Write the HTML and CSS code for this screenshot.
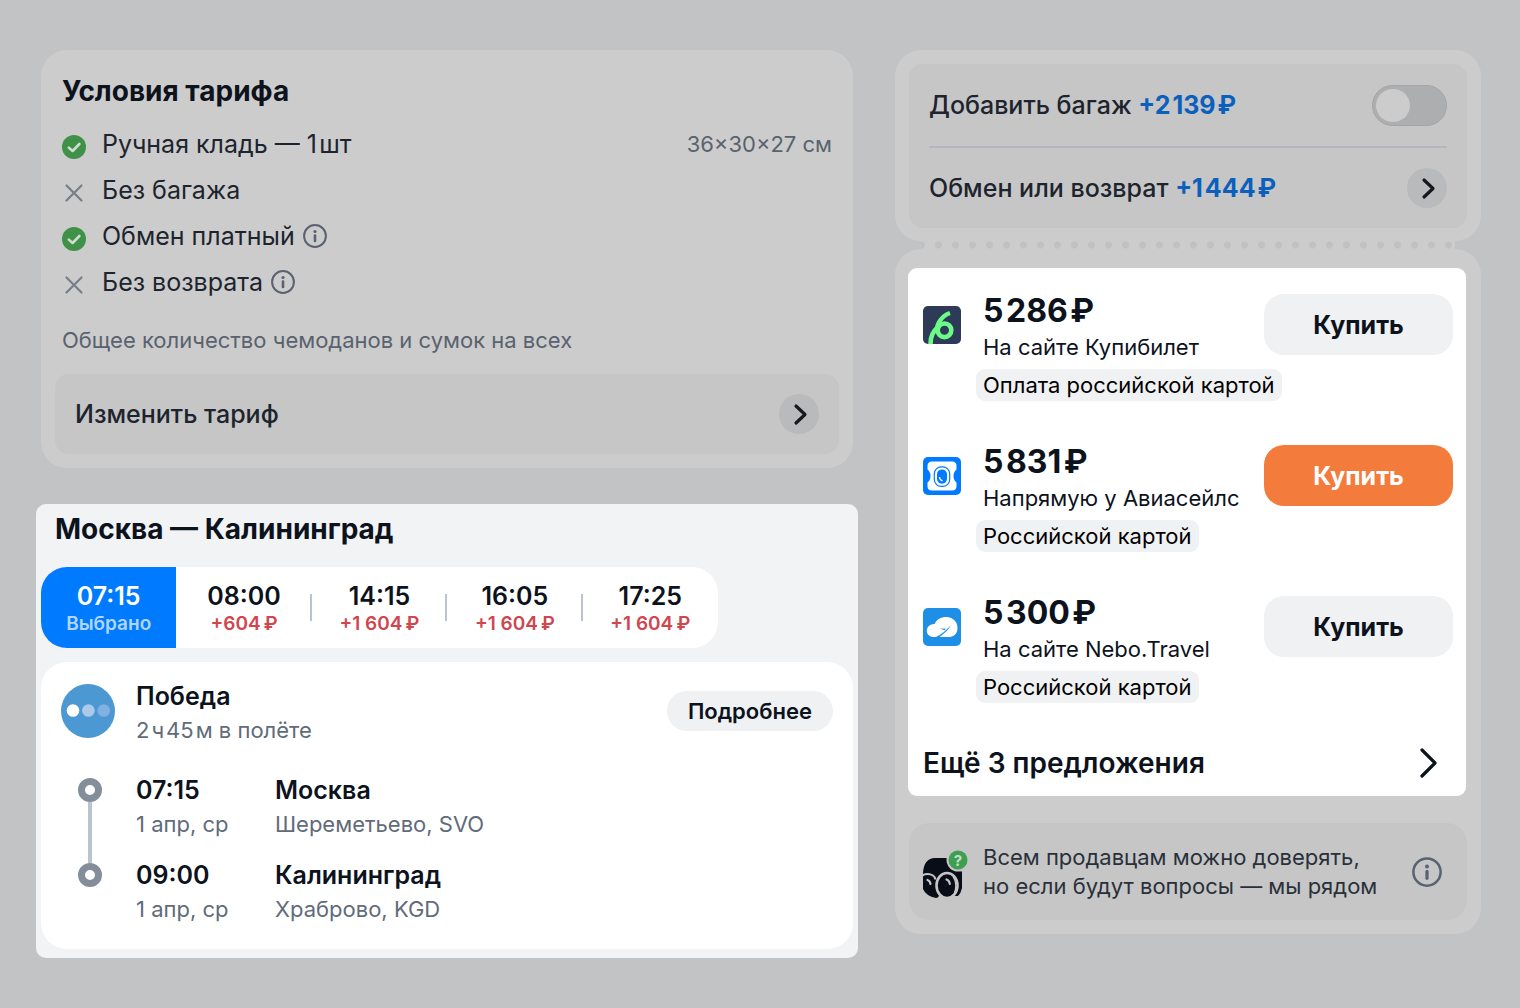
FILE: index.html
```html
<!DOCTYPE html>
<html lang="ru">
<head>
    <meta charset="UTF-8">
    <meta name="viewport" content="width=device-width, initial-scale=1.0">
    <title>Москва — Калининград</title>
    <link rel="stylesheet" href="styles.css">
</head>
<body>
    <svg class="sprite" aria-hidden="true">
        <symbol id="check" viewBox="0 0 24 24">
            <circle cx="12" cy="12" r="12" fill="#3f9147"/>
            <path d="M6.800 12.600l3.800 3.400 6.800-7" fill="none" stroke="#cfdccf" stroke-width="2.600" stroke-linecap="round" stroke-linejoin="round"/>
        </symbol>
        <symbol id="cross" viewBox="0 0 24 24">
            <path d="M4.500 4.500l15 15M19.500 4.500l-15 15" fill="none" stroke="#767e88" stroke-width="2.200" stroke-linecap="round"/>
        </symbol>
        <symbol id="info" viewBox="0 0 24 24">
            <circle cx="12" cy="12" r="10.900" fill="none" stroke="currentColor" stroke-width="2"/>
            <circle cx="12" cy="7.500" r="1.600" fill="currentColor"/>
            <path d="M12 11.500v5.500" stroke="currentColor" stroke-width="2.600" stroke-linecap="round"/>
        </symbol>
        <symbol id="chevron" viewBox="0 0 40 40">
            <path d="M17 12l9 8.500-9 8.500" fill="none" stroke="currentColor" stroke-width="3.200" stroke-linecap="round" stroke-linejoin="round"/>
        </symbol>
    </svg>

    <div class="page">
        <main class="column">
            <section class="card tariff">
                <h2>Условия тарифа</h2>
                <ul class="rules">
                    <li><svg class="mark"><use href="#check"/></svg>Ручная кладь — 1&#8202;шт <span class="size">36×30×27 см</span></li>
                    <li><svg class="mark"><use href="#cross"/></svg>Без багажа</li>
                    <li><svg class="mark"><use href="#check"/></svg>Обмен платный <svg class="info"><use href="#info"/></svg></li>
                    <li><svg class="mark"><use href="#cross"/></svg>Без возврата <svg class="info"><use href="#info"/></svg></li>
                </ul>
                <p class="note">Общее количество чемоданов и сумок на всех</p>
                <button class="change" type="button">Изменить тариф <svg class="arrow"><use href="#chevron"/></svg></button>
            </section>

            <section class="flight">
                <h2>Москва — Калининград</h2>
                <div class="times">
                    <button type="button" class="active"><b>07:15</b><small>Выбрано</small></button>
                    <button type="button"><b>08:00</b><small>+604&#8201;₽</small></button>
                    <button type="button"><b>14:15</b><small>+1 604&#8201;₽</small></button>
                    <button type="button"><b>16:05</b><small>+1 604&#8201;₽</small></button>
                    <button type="button"><b>17:25</b><small>+1 604&#8201;₽</small></button>
                </div>
                <div class="segment">
                    <div class="carrier">
                        <svg class="logo" viewBox="0 0 54 54">
                            <circle cx="27" cy="27" r="27" fill="#4b98d2"/>
                            <circle cx="12" cy="26.500" r="6.300" fill="#fff"/>
                            <circle cx="27.400" cy="26.500" r="6.300" fill="#abcaea"/>
                            <circle cx="42.800" cy="26.500" r="6.300" fill="#82b0e0"/>
                        </svg>
                        <div class="carrier-text">
                            <h3>Победа</h3>
                            <p>2&#8202;ч&#8202;45&#8202;м в полёте</p>
                        </div>
                        <button type="button" class="more">Подробнее</button>
                    </div>
                    <ol class="route">
                        <li>
                            <div><b>07:15</b><span>1 апр, ср</span></div>
                            <div><b>Москва</b><span>Шереметьево, SVO</span></div>
                        </li>
                        <li>
                            <div><b>09:00</b><span>1 апр, ср</span></div>
                            <div><b>Калининград</b><span>Храброво, KGD</span></div>
                        </li>
                    </ol>
                </div>
            </section>
        </main>

        <aside class="column">
            <section class="card options">
                <div class="panel">
                    <div class="option">
                        <label for="baggage">Добавить багаж <strong>+2&#8202;139&#8202;₽</strong></label>
                        <input type="checkbox" id="baggage" class="switch">
                    </div>
                    <div class="option">
                        <span>Обмен или возврат <strong>+1&#8202;444&#8202;₽</strong></span>
                        <button type="button" aria-label="Обмен или возврат"><svg class="arrow"><use href="#chevron"/></svg></button>
                    </div>
                </div>
            </section>
            <div class="perforation"></div>
            <section class="card prices">
                <div class="offers">
                    <div class="offer">
                        <svg class="agent" viewBox="0 0 38 38">
                            <rect width="38" height="38" rx="5" fill="#2d3a58"/>
                            <path d="M7.500 38C7.500 30 10 25.500 16 20" fill="none" stroke="#6dfb87" stroke-width="4.600"/>
                            <path d="M27 7C19 9.500 13.500 18 13.800 25" fill="none" stroke="#6dfb87" stroke-width="4.400"/>
                            <circle cx="21.500" cy="24.300" r="6.800" fill="none" stroke="#6dfb87" stroke-width="4.600"/>
                        </svg>
                        <div class="offer-text">
                            <b>5&#8202;286&#8202;₽</b>
                            <p>На сайте Купибилет</p>
                            <span class="chip">Оплата российской картой</span>
                        </div>
                        <button type="button" class="buy">Купить</button>
                    </div>
                    <div class="offer">
                        <svg class="agent" viewBox="0 0 38 38">
                            <rect width="38" height="38" rx="5" fill="#007aff"/>
                            <path d="M9 4.500h20q4.500 0 4.500 4.500v3.500q-3 2.500-3 6.500t3 6.500V29q0 4.500-4.500 4.500H9q-4.500 0-4.500-4.500v-3.500q3-2.500 3-6.500t-3-6.500V9q0-4.500 4.500-4.500z" fill="#fff"/>
                            <rect x="11.300" y="9.800" width="15.400" height="19.600" rx="7" fill="none" stroke="#007aff" stroke-width="1.200"/>
                            <rect x="14" y="12.400" width="10" height="14.400" rx="5" fill="#007aff"/>
                            <path d="M16.500 20q0 3 3 3.800" fill="none" stroke="#fff" stroke-width="1.200"/>
                        </svg>
                        <div class="offer-text">
                            <b>5&#8202;831&#8202;₽</b>
                            <p>Напрямую у Авиасейлс</p>
                            <span class="chip">Российской картой</span>
                        </div>
                        <button type="button" class="buy primary">Купить</button>
                    </div>
                    <div class="offer">
                        <svg class="agent" viewBox="0 0 38 38">
                            <rect width="38" height="38" rx="5" fill="#1e8fe6"/>
                            <path d="M10 29C1.500 28.500 1.500 16 11.500 16 15.500 6.500 31 6.500 34 16.500 36 24 32 29 26 29z" fill="#fff"/>
                            <path d="M13 29c6-3 10-6.500 15.500-12.500-3 5-6.500 8.500-12 12.500zM17 20.500l6 .3-1.500 1.500z" fill="#1e8fe6"/>
                        </svg>
                        <div class="offer-text">
                            <b>5&#8202;300&#8202;₽</b>
                            <p>На сайте Nebo.Travel</p>
                            <span class="chip">Российской картой</span>
                        </div>
                        <button type="button" class="buy">Купить</button>
                    </div>
                    <button type="button" class="show-all">Ещё 3 предложения
                        <svg viewBox="0 0 20 32"><path d="M3 3l13 13L3 29" fill="none" stroke="currentColor" stroke-width="3.200" stroke-linecap="round" stroke-linejoin="round"/></svg>
                    </button>
                </div>
                <div class="trust">
                    <svg class="mascot" viewBox="0 0 46 50">
                        <path d="M1 26C1 14 6 9 13 9h15l12 14v16q-1 5-4 8H17q-1 2-3 2-10-2-13-9z" fill="#080d17"/>
                        <path d="M0 26.500q6-3 11 0q2 1.500 2.500 4" fill="none" stroke="#c6c6c6" stroke-width="2"/>
                        <ellipse cx="25" cy="36.500" rx="10.500" ry="12.500" fill="#080d17" stroke="#c6c6c6" stroke-width="2.600"/>
                        <path d="M31 27.500q5 8 1 18" fill="none" stroke="#c6c6c6" stroke-width="1.200"/>
                        <path d="M24.500 30.500q3 1 3.300 4.500M5.500 31q2.500 .800 3 4" fill="none" stroke="#c6c6c6" stroke-width="2.200" stroke-linecap="round"/>
                        <circle cx="36" cy="11" r="11.500" fill="#c6c6c6"/>
                        <circle cx="36" cy="11" r="9.500" fill="#3e9e52"/>
                        <text x="36" y="16.500">?</text>
                    </svg>
                    <p>Всем продавцам можно доверять,<br>но если будут вопросы — мы рядом</p>
                    <svg class="info large"><use href="#info"/></svg>
                </div>
            </section>
        </aside>
    </div>
</body>
</html>
```
FILE: styles.css
```css
*,
*::before,
*::after {
    box-sizing: border-box;
}

body {
    margin: 0;
    min-height: 100vh;
    background-color: #c2c3c5;
    font-family: 'Inter', 'Liberation Sans', sans-serif;
    color: #0d131d;
}

h2, h3, p, ul, ol {
    margin: 0;
    padding: 0;
    list-style: none;
}

button {
    border: none;
    padding: 0;
    background: none;
    font-family: inherit;
    color: inherit;
    cursor: pointer;
}

.sprite {
    display: none;
}

.page {
    display: grid;
    grid-template-columns: 812fr 586fr;
    align-items: start;
    gap: 42px;
    padding: 50px 39px 50px 41px;
}

h2 {
    font-size: 28px;
    line-height: 36px;
    font-weight: 700;
}

.card {
    background-color: #ccc;
    border-radius: 26px;
    padding: 14px;
}

/* Условия тарифа */
.tariff {
    padding-top: 23px;
    color: #1d242e;
}

.tariff h2 {
    padding: 0 7px;
    color: #0d131d;
}

.rules {
    margin-top: 12px;
    padding: 0 7px;
}

.rules li {
    display: flex;
    align-items: center;
    gap: 8px;
    height: 46px;
    font-size: 25px;
}

.mark {
    width: 24px;
    height: 24px;
    margin: 5px 8px 0 0;
}

.info {
    width: 24px;
    height: 24px;
    overflow: visible;
    color: #59626e;
}

.size {
    margin-left: auto;
    font-size: 22px;
    color: #59626e;
}

.note {
    margin: 21px 7px 20px;
    font-size: 22px;
    line-height: 28px;
    color: #59626e;
}

.change {
    display: flex;
    align-items: center;
    justify-content: space-between;
    width: 100%;
    height: 80px;
    padding: 0 20px;
    border-radius: 14px;
    background-color: #c6c6c6;
    font-size: 25px;
    font-weight: 500;
}

.arrow {
    display: block;
    width: 40px;
    height: 40px;
    border-radius: 50%;
    background-color: #b9babc;
    color: #14191f;
}

/* Рейс */
.flight {
    margin: 36px -5px 0;
    padding: 7px 5px 9px;
    border-radius: 10px;
    background-color: #f2f3f5;
}

.flight h2 {
    padding: 0 14px;
}

.times {
    display: grid;
    grid-template-columns: repeat(5, 1fr);
    width: 677px;
    max-width: 100%;
    margin-top: 20px;
    border-radius: 26px;
    overflow: hidden;
    background-color: #fff;
}

.times button {
    position: relative;
    height: 81px;
    padding-top: 4px;
}

.times button + button + button::before {
    content: '';
    position: absolute;
    left: -2px;
    top: 27px;
    width: 2px;
    height: 27px;
    background-color: #bcc3d0;
}

.times b,
.times small {
    display: block;
    line-height: 28px;
    font-weight: 600;
}

.times b {
    font-size: 25px;
}

.times small {
    font-size: 19px;
    color: #d0464e;
}

.times .active {
    background-color: #007aff;
    color: #fff;
}

.times .active small {
    color: #b0d6ff;
}

.segment {
    margin-top: 14px;
    padding: 17px 20px 23px;
    border-radius: 26px;
    background-color: #fff;
}

.segment h3,
.segment p,
.route b,
.route span {
    display: block;
    line-height: 34px;
}

.segment h3,
.route b {
    font-size: 25px;
    font-weight: 600;
}

.segment p,
.route span {
    font-size: 22px;
    color: #616b7a;
}

.carrier {
    display: flex;
    align-items: center;
    gap: 21px;
}

.logo {
    width: 54px;
    height: 54px;
    margin-bottom: 4px;
}

.carrier-text {
    flex: 1;
}

.more {
    height: 40px;
    margin-bottom: 4px;
    padding: 0 21px;
    border-radius: 20px;
    background-color: #f0f1f3;
    font-size: 22px;
    font-weight: 600;
}

.route {
    display: grid;
    gap: 17px;
    margin-top: 26px;
}

.route li {
    position: relative;
    display: grid;
    grid-template-columns: 139px 1fr;
    padding-left: 75px;
}

.route li::before {
    content: '';
    position: absolute;
    left: 17px;
    top: 5px;
    width: 24px;
    height: 24px;
    border: 7px solid #848e9a;
    border-radius: 50%;
}

.route li:first-child::after {
    content: '';
    position: absolute;
    left: 27px;
    top: 29px;
    width: 4px;
    height: 61px;
    background-color: #bcc3d0;
}

/* Дополнительные опции */
.options {
    padding-bottom: 13px;
}

.panel {
    padding: 0 20px;
    border-radius: 14px;
    background-color: #c6c6c6;
}

.option {
    display: flex;
    align-items: center;
    justify-content: space-between;
    height: 82px;
    font-size: 25px;
    font-weight: 500;
    color: #1d242e;
}

.option + .option {
    border-top: 2px solid #b6b7be;
}

.option strong {
    font-weight: 700;
    color: #0b60bd;
}

.switch {
    appearance: none;
    width: 75px;
    height: 41px;
    margin: 0;
    padding: 3px;
    border: 1px solid #a3a5a8;
    border-radius: 21px;
    background-color: #adaeb0;
    cursor: pointer;
}

.switch::before {
    content: '';
    display: block;
    width: 34px;
    height: 33px;
    border-radius: 50%;
    background-color: #ccc;
}

.switch:checked::before {
    margin-left: auto;
}

.perforation {
    height: 8px;
    margin: 0 26px;
    background: #ccc radial-gradient(circle, #c0c1c4 3px, transparent 4px) 9px 0 / 17px 8px;
}

/* Предложения */
.prices {
    padding-top: 19px;
}

.offers {
    margin: 0 1px 0 -1px;
    padding: 23px 13px 0 15px;
    border-radius: 9px;
    background-color: #fff;
}

.offer {
    display: flex;
    align-items: flex-start;
    margin-bottom: 41px;
}

.agent {
    width: 38px;
    height: 38px;
    margin: 15px 22px 0 0;
}

.offer-text {
    flex: 1;
    width: 0;
    white-space: nowrap;
}

.offer-text b {
    display: block;
    font-size: 32px;
    line-height: 40px;
    font-weight: 700;
}

.offer-text p {
    font-size: 22px;
    line-height: 32px;
}

.chip {
    display: inline-block;
    margin: 6px 0 0 -7px;
    padding: 0 7px;
    border-radius: 9px;
    background-color: #f0f1f3;
    font-size: 22px;
    line-height: 32px;
    color: #000;
}

.buy {
    width: 189px;
    height: 61px;
    margin-top: 3px;
    border-radius: 20px;
    background-color: #f0f1f3;
    font-size: 25px;
    font-weight: 700;
}

.primary {
    background-color: #f37b3c;
    color: #fff;
}

.show-all {
    display: flex;
    align-items: center;
    justify-content: space-between;
    width: 100%;
    height: 67px;
    margin-top: -15px;
    padding-right: 14px;
    font-size: 28px;
    font-weight: 600;
}

.show-all svg {
    width: 20px;
    height: 32px;
}

.trust {
    display: flex;
    align-items: center;
    margin-top: 27px;
    padding: 20px 25px 19px 13px;
    border-radius: 20px;
    background-color: #c6c6c6;
    font-size: 22px;
    line-height: 29px;
    color: #29303a;
}

.trust p {
    flex: 1;
}

.mascot {
    width: 46px;
    height: 50px;
    margin: 4px 15px 0 0;
}

.mascot text {
    font-size: 15px;
    font-weight: 700;
    text-anchor: middle;
    fill: #c6dcca;
}

.large {
    width: 30px;
    height: 30px;
}
```
